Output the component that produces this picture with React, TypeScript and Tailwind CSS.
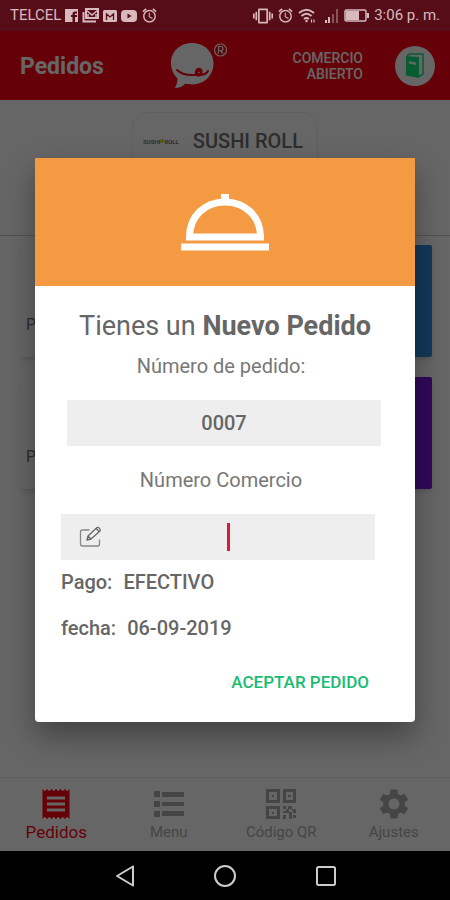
import type { ReactNode } from "react";
import { MdAlarm, MdReceipt, MdSettings, MdVibration } from "react-icons/md";

const FacebookIcon = () => (
  <svg viewBox="0 0 13 13" className="size-[13px]" fill="currentColor">
    <path d="M0 0h13v13h-3V8h2V6h-2V4.500h2v-2h-2Q7.500 2.500 7.500 5v1H6v2h1.500v5H0z" />
  </svg>
);

const GalleryIcon = () => (
  <svg viewBox="0 0 17 15" className="h-[15px] w-[17px]" fill="none" stroke="currentColor">
    <rect x="4" y="1" width="12" height="9" strokeWidth="2" />
    <path d="M4 2l6 5 6-5M6 10V6M14 10V6" strokeWidth="1.500" />
    <path d="M1.500 4v9.500H14" strokeWidth="2" />
  </svg>
);

const MailIcon = () => (
  <svg viewBox="0 0 14 12" className="h-3 w-3.5">
    <rect width="14" height="12" rx="1.500" fill="currentColor" />
    <path d="M3.500 10V4L7 7l3.500-3v6" fill="none" stroke="#560d18" strokeWidth="1.300" />
  </svg>
);

const VideoIcon = () => (
  <svg viewBox="0 0 16 12" className="h-3 w-4">
    <rect width="16" height="12" rx="4" fill="currentColor" />
    <path d="M6.500 3.500v5L10.500 6z" fill="#560d18" />
  </svg>
);

const WifiIcon = () => (
  <svg viewBox="0 0 18 15" className="h-[15px] w-[18px]" fill="none" stroke="currentColor" strokeWidth="1.800">
    <path d="M1 5q7.500-6.500 15 0M3.500 8q5-4.500 10 0M6 11q2.500-2 5 0" />
    <circle cx="8.500" cy="13" r="1.200" fill="currentColor" stroke="none" />
    <path d="M13.500 11.500v3M16 11.500v3" strokeWidth="1.200" />
  </svg>
);

const SignalIcon = () => (
  <svg viewBox="0 0 16 15" className="h-[15px] w-4" fill="currentColor">
    <rect x="1" y="12" width="2" height="3" />
    <rect x="4" y="9" width="2" height="6" />
    <rect x="8" y="6" width="2" height="9" opacity="0.4" />
    <rect x="12" y="1" width="2" height="14" opacity="0.4" />
  </svg>
);

const BatteryIcon = () => (
  <svg viewBox="0 0 26 13" className="h-[13px] w-[26px]">
    <rect x="1" y="1" width="21" height="11" rx="1.500" fill="none" stroke="currentColor" strokeWidth="1.500" />
    <rect x="2" y="2" width="13" height="9" fill="currentColor" />
    <path d="M24 4v5" stroke="currentColor" strokeWidth="2" />
  </svg>
);

const BubbleLogo = () => (
  <svg viewBox="0 0 58 48" className="h-12 w-[58px]">
    <path
      d="M22 1C9.500 1 1 10 1 21c0 7 3 12 6.500 15.500C7.500 41 6 43.500 5 46c5 0 8-2 10.500-4.500 2 .6 4 .9 6.500.9 12.500 0 21.500-9 21.500-20.900C43.500 10 34.500 1 22 1z"
      fill="#fff"
    />
    <path d="M7 28q5 5 15 5h7q7 0 9-4" fill="none" stroke="#ff0014" strokeWidth="2" strokeLinecap="round" />
    <path d="M25 33c-1-5 2-8 5-7 3 .5 3 4 2 7-2 2-5 2-7 0z" fill="#ff0014" />
    <circle cx="29" cy="30.500" r="0.800" fill="#fff" />
    <circle cx="50.500" cy="8" r="6" fill="none" stroke="#fff" strokeWidth="1.200" />
    <path d="M48.500 11.500v-7h2.500a2 2 0 0 1 0 4h-2.500m2 0 2.500 3" fill="none" stroke="#fff" strokeWidth="1.200" />
  </svg>
);

const DoorIcon = () => (
  <svg viewBox="0 0 20 26" className="h-[26px] w-5">
    <path d="M2 2.500 5 1h13v20l-4 2.500" fill="none" stroke="#14e67d" strokeWidth="1.500" />
    <path d="M1 3l13 1v21L1 22.500z" fill="#14e67d" />
    <path d="M4 8l7 1.500v2.500L4 10.500z" fill="#fff" />
  </svg>
);

const ClocheIcon = () => (
  <svg viewBox="0 0 88 57" className="h-[57px] w-[88px]" fill="none" stroke="#fff">
    <path d="M8.500 43C8.500 22 24 8 44 8s35.500 14 35.500 35z" strokeWidth="7" />
    <path d="M44 0v8" strokeWidth="8" />
    <path d="M0 53h88" strokeWidth="7" />
  </svg>
);

const EditIcon = () => (
  <svg
    viewBox="0 0 22 22"
    className="size-[22px] shrink-0"
    fill="none"
    stroke="#888"
    strokeWidth="1.300"
    strokeLinejoin="round"
    strokeLinecap="round"
  >
    <path d="M10 4H3.500Q1.500 4 1.500 6v12q0 2 2 2h15q2 0 2-2v-4" />
    <path d="M8 14l1-4 9-8.500q1.500-.5 2.500 1T21 5l-9 8zM9 10l3 3M17 2.500l3 3" stroke="#666" />
  </svg>
);

const ListIcon = () => (
  <svg viewBox="0 0 30 26" className="h-[26px] w-[30px]" fill="#adadad">
    <path d="M0 0h6v6H0zM8 1h22v5H8zM0 10h6v6H0zM8 11h22v4H8zM0 20h6v6H0zM8 20h22v5H8z" />
  </svg>
);

const QrIcon = () => (
  <svg viewBox="0 0 30 30" className="size-[30px]" fill="#adadad">
    <path
      fillRule="evenodd"
      d="M0 0h14v14H0zM3 3v8h8V3zM17 0h13v14H17zM20 3v8h7V3zM0 17h14v13H0zM3 20v7h8v-7z"
    />
    <path d="M6 6h2v2H6zM22 6h3v2h-3zM6 23h2v2H6zM17 17h3v3h-3zM22 17h4v3h-4zM20 20h3v4h-6v-2h3zM26 20h4v4h-3v-2h-1zM17 26h3v4h-3zM23 23h3v7h-3zM27 26h3v3h-3z" />
  </svg>
);

const StatusBar = () => (
  <div className="flex h-[31px] items-center justify-between bg-[#560d18] px-2.5 text-[15px] text-[#d8b9bd]">
    <div className="flex items-center gap-1">
      <span>TELCEL</span>
      <FacebookIcon />
      <GalleryIcon />
      <MailIcon />
      <VideoIcon />
      <MdAlarm className="size-[17px]" />
    </div>
    <div className="flex items-center gap-1">
      <MdVibration className="size-5" />
      <MdAlarm className="size-[17px]" />
      <WifiIcon />
      <span className="pl-1">
        <SignalIcon />
      </span>
      <BatteryIcon />
      <span>3:06 p. m.</span>
    </div>
  </div>
);

const OrderCard = ({ stripe }: { stripe: string }) => (
  <div className="flex h-28 overflow-hidden rounded-xs bg-white shadow-md">
    <p className="flex-1 px-1.5 pt-[68px] text-base leading-6 text-[#707070]">P</p>
    <div className={`w-16 ${stripe}`} />
  </div>
);

interface TabProps {
  icon: ReactNode;
  label: string;
  active?: boolean;
}

const Tab = ({ icon, label, active }: TabProps) => (
  <a href="#" className="flex flex-1 flex-col items-center">
    <span className="flex h-9 items-center">{icon}</span>
    <span
      className={`leading-5 ${active ? "text-[17px] text-[#ff0020]" : "text-[15px] text-[#adadad]"}`}
    >
      {label}
    </span>
  </a>
);

const SystemNav = () => (
  <div className="flex h-[49px] items-center justify-center gap-20 bg-black">
    <button aria-label="Atrás">
      <svg viewBox="0 0 20 22" className="h-[22px] w-5" fill="none" stroke="#ccc" strokeWidth="2" strokeLinejoin="round">
        <path d="M19 1.500v19L3 11z" />
      </svg>
    </button>
    <button aria-label="Inicio">
      <svg viewBox="0 0 22 22" className="size-[22px]" fill="none" stroke="#ccc" strokeWidth="2">
        <circle cx="11" cy="11" r="10" />
      </svg>
    </button>
    <button aria-label="Recientes">
      <svg viewBox="0 0 20 20" className="size-5" fill="none" stroke="#ccc" strokeWidth="2">
        <rect x="1" y="1" width="18" height="18" rx="1.500" />
      </svg>
    </button>
  </div>
);

const NewOrderDialog = () => (
  <div
    role="dialog"
    aria-labelledby="dialog-title"
    className="w-full overflow-hidden rounded-b-sm bg-white text-[#666] shadow-[0_14px_30px_rgba(0,0,0,0.35)]"
  >
    <div className="flex h-32 items-center justify-center bg-[#f49a43]">
      <ClocheIcon />
    </div>
    <h2 id="dialog-title" className="pt-6 text-center text-[27px] leading-8 font-normal">
      Tienes un <strong className="font-bold">Nuevo Pedido</strong>
    </h2>
    <div className="flex flex-col gap-[22px] pt-3 pr-[34px] pb-5 pl-[26px] text-xl leading-6">
      <p className="text-center text-[#777]">Número de pedido:</p>
      <p className="ml-1.5 bg-[#eee] py-[11px] text-center font-medium">0007</p>
      <label htmlFor="comercio" className="text-center text-[#777]">
        Número Comercio
      </label>
      <div className="relative mr-1.5 flex h-[46px] items-center bg-[#eee] pl-[18px]">
        <EditIcon />
        <input id="comercio" className="h-full min-w-0 flex-1 text-center caret-transparent outline-none" />
        <span className="pointer-events-none absolute inset-0 flex items-center justify-center pl-5">
          <span className="h-7 w-[3px] bg-[#d81b3c]" />
        </span>
      </div>
      <p className="-mt-3 font-medium">
        Pago: <span className="pl-1.5">EFECTIVO</span>
      </p>
      <p className="font-medium">
        fecha: <span className="pl-1.5">06-09-2019</span>
      </p>
      <button className="h-10 self-end px-3 text-[17px] font-medium text-[#1abc73]">
        ACEPTAR PEDIDO
      </button>
    </div>
  </div>
);

export default function App() {
  return (
    <div className="flex min-h-screen flex-col bg-white font-[Roboto,sans-serif]">
      <StatusBar />
      <div className="relative flex flex-1 flex-col">
        <header className="flex h-[69px] items-center bg-[#ff0014] pr-[15px] text-white">
          <h1 className="w-[39%] pt-1 pl-5 text-[23px] font-bold">Pedidos</h1>
          <BubbleLogo />
          <p className="ml-auto text-right text-sm leading-4 font-medium">
            COMERCIO
            <br />
            ABIERTO
          </p>
          <button
            aria-label="Comercio abierto"
            className="ml-8 flex size-10 items-center justify-center rounded-full bg-white"
          >
            <DoorIcon />
          </button>
        </header>

        <section className="flex justify-center border-b border-[#ccc] pt-3 pb-[65px]">
          <div className="flex h-[58px] items-center gap-3.5 rounded-2xl border border-[#ededed] pr-3.5 pl-2.5">
            <span className="flex items-center text-[6px] font-bold text-[#777]">
              SUSHI
              <span className="size-1 rounded-full bg-[#d4e000]" />
              ROLL
            </span>
            <span className="text-xl font-medium text-[#707070]">SUSHI ROLL</span>
          </div>
        </section>

        <main className="flex flex-1 flex-col gap-5 pt-[9px] pr-[18px] pl-5">
          <OrderCard stripe="bg-[#2d8fe1]" />
          <OrderCard stripe="bg-[#7d14e1]" />
        </main>

        <nav className="flex h-[74px] border-t border-[#f0f0f0] pt-2">
          <Tab icon={<MdReceipt className="size-9 text-[#ff0014]" />} label="Pedidos" active />
          <Tab icon={<ListIcon />} label="Menu" />
          <Tab icon={<QrIcon />} label="Código QR" />
          <Tab icon={<MdSettings className="size-9 text-[#adadad]" />} label="Ajustes" />
        </nav>

        <div className="absolute inset-0 flex items-center justify-center bg-black/60 px-[35px] pb-0.5">
          <NewOrderDialog />
        </div>
      </div>
      <SystemNav />
    </div>
  );
}
